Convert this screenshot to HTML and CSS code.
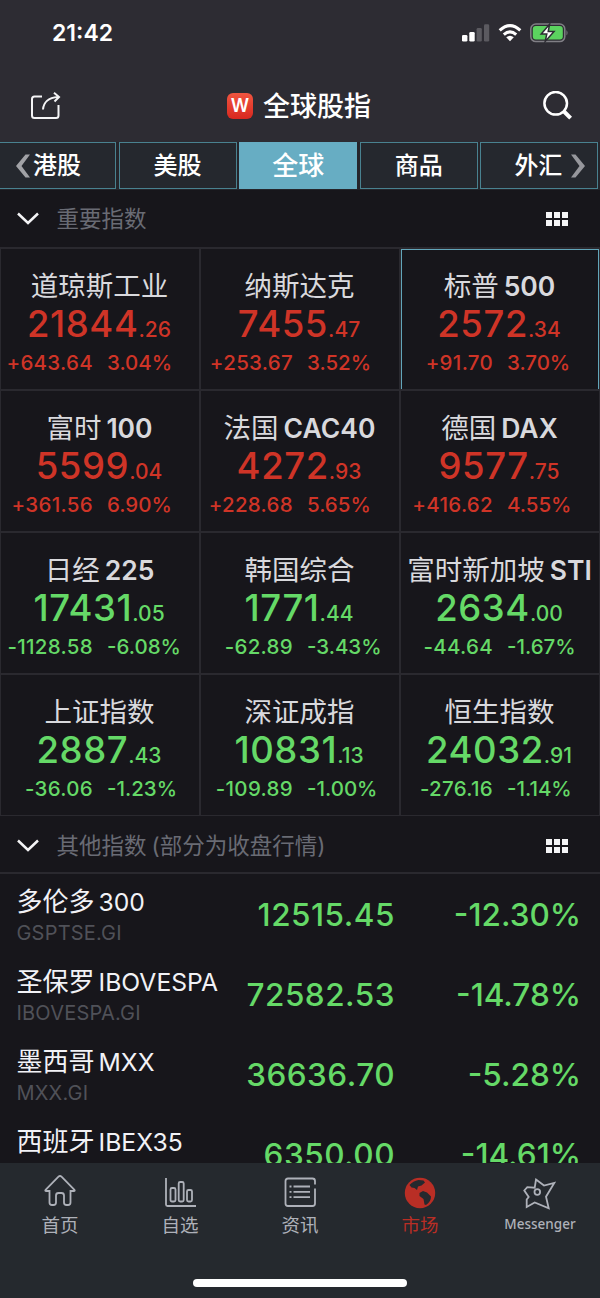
FILE: index.html
```html
<!DOCTYPE html>
<html lang="zh-CN">
<head>
  <meta charset="UTF-8" />
  <meta name="viewport" content="width=device-width, initial-scale=1.0"/>
  <title>全球股指</title>
  <link rel="stylesheet" href="styles.css">
</head>

<body>
  <header>
    <div class="status-bar">
      <span class="time">21:42</span>
      <div class="status-icons">
        <svg class="signal" width="28" height="18" viewBox="0 0 28 18">
          <rect x="0" y="11" width="5.4" height="6.5" rx="1.3" fill="#fff"/>
          <rect x="7.3" y="8" width="5.4" height="9.5" rx="1.3" fill="#fff"/>
          <rect x="14.6" y="4" width="5.2" height="13.5" rx="1.3" fill="#5b5a60"/>
          <rect x="22" y="0.3" width="5.2" height="17.2" rx="1.3" fill="#5b5a60"/>
        </svg>
        <svg class="wifi" width="24" height="18" viewBox="0 0 24 18">
          <g fill="none" stroke="#fff" stroke-width="3.1">
            <path d="M1.7 6.4Q12-3 22.3 6.4"/>
            <path d="M5.8 10.6Q12 5 18.2 10.6"/>
          </g>
          <path d="M8.2 13.3Q12 10.2 15.8 13.3L12 17.3Z" fill="#fff"/>
        </svg>
        <svg class="battery" width="39" height="20" viewBox="0 0 39 20">
          <rect x="0.8" y="1" width="34" height="17.6" rx="5" fill="none" stroke="#807f85" stroke-width="1.5"/>
          <rect x="2.8" y="3" width="30" height="13.6" rx="3" fill="#5bd35f"/>
          <path d="M36.5 7Q38.6 9.8 36.5 12.6Z" fill="#807f85"/>
          <path d="M19.6 1.2L11.2 11h5.6l-1.6 7.4L24 8.6h-5.8Z" fill="#fff" stroke="#2d2c33" stroke-width="1.5"/>
        </svg>
      </div>
    </div>
    <div class="title-bar">
      <svg class="share" width="31" height="29" viewBox="0 0 31 29" fill="none" stroke="#f4f4f6" stroke-width="2">
        <path d="M12 4.500H4.500Q2 4.500 2 7V23.500Q2 26 4.500 26H26Q28.500 26 28.500 23.500V13"/>
        <path d="M13 17.500C13.500 11 18 5.500 28 5"/>
        <path d="M24 0.800L29 5L24.500 9.500"/>
      </svg>
      <h1><span class="logo">W</span>全球股指</h1>
      <svg class="search" width="30" height="30" viewBox="0 0 30 30" fill="none" stroke="#fff">
        <circle cx="12.700" cy="12.300" r="11.300" stroke-width="2.500"/>
        <path d="M20.500 20L27.600 27.200" stroke-width="4"/>
      </svg>
    </div>
    <nav class="tabs">
      <a class="tab first"><svg width="14" height="24" viewBox="0 0 14 24"><path d="M14 0.500H9.500L0 12L9.500 23.500H14L5.500 12Z" fill="#a1a2a6"/></svg>港股</a>
      <a class="tab">美股</a>
      <a class="tab active">全球</a>
      <a class="tab">商品</a>
      <a class="tab last">外汇<svg width="14" height="24" viewBox="0 0 14 24"><path d="M0 0.500H4.500L14 12L4.500 23.500H0L8.500 12Z" fill="#96979c"/></svg></a>
    </nav>
  </header>

  <main>
    <div class="section-head">
      <svg class="chevron" width="22" height="13" viewBox="0 0 22 13"><path d="M1 1.500L11 11L21 1.500"/></svg>
      <h2>重要指数</h2>
      <div class="dots"><i></i><i></i><i></i><i></i><i></i><i></i></div>
    </div>

    <section class="grid">
      <div class="cell up">
        <div class="name">道琼斯工业</div>
        <div class="price">21844<small>.26</small></div>
        <div class="change"><span>+643.64</span><span>3.04%</span></div>
      </div>
      <div class="cell up">
        <div class="name">纳斯达克</div>
        <div class="price">7455<small>.47</small></div>
        <div class="change"><span>+253.67</span><span>3.52%</span></div>
      </div>
      <div class="cell up selected">
        <div class="name">标普<b>500</b></div>
        <div class="price">2572<small>.34</small></div>
        <div class="change"><span>+91.70</span><span>3.70%</span></div>
      </div>
      <div class="cell up">
        <div class="name">富时<b>100</b></div>
        <div class="price">5599<small>.04</small></div>
        <div class="change"><span>+361.56</span><span>6.90%</span></div>
      </div>
      <div class="cell up">
        <div class="name">法国<b>CAC40</b></div>
        <div class="price">4272<small>.93</small></div>
        <div class="change"><span>+228.68</span><span>5.65%</span></div>
      </div>
      <div class="cell up">
        <div class="name">德国<b>DAX</b></div>
        <div class="price">9577<small>.75</small></div>
        <div class="change"><span>+416.62</span><span>4.55%</span></div>
      </div>
      <div class="cell down">
        <div class="name">日经<b>225</b></div>
        <div class="price">17431<small>.05</small></div>
        <div class="change"><span>-1128.58</span><span>-6.08%</span></div>
      </div>
      <div class="cell down">
        <div class="name">韩国综合</div>
        <div class="price">1771<small>.44</small></div>
        <div class="change"><span>-62.89</span><span>-3.43%</span></div>
      </div>
      <div class="cell down">
        <div class="name">富时新加坡<b>STI</b></div>
        <div class="price">2634<small>.00</small></div>
        <div class="change"><span>-44.64</span><span>-1.67%</span></div>
      </div>
      <div class="cell down">
        <div class="name">上证指数</div>
        <div class="price">2887<small>.43</small></div>
        <div class="change"><span>-36.06</span><span>-1.23%</span></div>
      </div>
      <div class="cell down">
        <div class="name">深证成指</div>
        <div class="price">10831<small>.13</small></div>
        <div class="change"><span>-109.89</span><span>-1.00%</span></div>
      </div>
      <div class="cell down">
        <div class="name">恒生指数</div>
        <div class="price">24032<small>.91</small></div>
        <div class="change"><span>-276.16</span><span>-1.14%</span></div>
      </div>
    </section>

    <div class="section-head other">
      <svg class="chevron" width="22" height="13" viewBox="0 0 22 13"><path d="M1 1.500L11 11L21 1.500"/></svg>
      <h2>其他指数<span class="note">(部分为收盘行情)</span></h2>
      <div class="dots"><i></i><i></i><i></i><i></i><i></i><i></i></div>
    </div>

    <section class="list">
      <div class="row">
        <div class="info"><div class="label">多伦多<b>300</b></div><div class="code">GSPTSE.GI</div></div>
        <div class="last-price">12515.45</div>
        <div class="percent">-12.30%</div>
      </div>
      <div class="row">
        <div class="info"><div class="label">圣保罗<b>IBOVESPA</b></div><div class="code">IBOVESPA.GI</div></div>
        <div class="last-price">72582.53</div>
        <div class="percent">-14.78%</div>
      </div>
      <div class="row">
        <div class="info"><div class="label">墨西哥<b>MXX</b></div><div class="code">MXX.GI</div></div>
        <div class="last-price">36636.70</div>
        <div class="percent">-5.28%</div>
      </div>
      <div class="row">
        <div class="info"><div class="label">西班牙<b>IBEX35</b></div></div>
        <div class="last-price">6350.00</div>
        <div class="percent">-14.61%</div>
      </div>
    </section>
  </main>

  <footer>
    <nav class="bottom-nav">
      <a>
        <svg width="34" height="34" viewBox="0 0 34 34">
          <path d="M6.500 18H3.300Q1.500 18 2.800 16.500L15.500 3.700Q17 2.300 18.500 3.700L31.200 16.500Q32.500 18 30.700 18H27.500V29.500Q27.500 32 25 32H23.500Q21 32 21 29.500V22.500Q21 20 18.500 20H15.500Q13 20 13 22.500V29.500Q13 32 10.500 32H9Q6.500 32 6.500 29.500Z"/>
        </svg>
        首页
      </a>
      <a>
        <svg width="34" height="34" viewBox="0 0 34 34">
          <path d="M3 5V31.500Q3 33 4.500 33H33"/>
          <rect x="7.500" y="15" width="5" height="13.500" rx="1.500"/>
          <rect x="15.700" y="9" width="5" height="19.500" rx="1.500"/>
          <rect x="24" y="17" width="5" height="11.500" rx="1.500"/>
        </svg>
        自选
      </a>
      <a>
        <svg width="34" height="34" viewBox="0 0 34 34">
          <path d="M32 11.500V8Q32 5.500 29.500 5.500H5Q2.500 5.500 2.500 8V30.500Q2.500 33 5 33H29.500Q32 33 32 30.500V15.500"/>
          <path d="M10.500 13.500H27M10.500 18.800H27M10.500 24.200H27M6.500 13.500H8.500M6.500 18.800H8.500M6.500 24.200H8.500"/>
        </svg>
        资讯
      </a>
      <a class="current">
        <svg width="34" height="34" viewBox="0 0 34 34">
          <circle cx="17" cy="20" r="15.200" fill="#b92e25" stroke="none"/>
          <path d="M6.500 12Q10 8 15.500 7L20.500 7.500L22 9.500L18.500 12.500L15 13.500L14 17L11.500 15L8.500 14.500Z" fill="#25292e" stroke="none"/>
          <path d="M16.500 20L20 18L24 19.500L28 23.500Q28 29 23 32L21.500 31.500L20.500 26L16.500 23Z" fill="#25292e" stroke="none"/>
        </svg>
        市场
      </a>
      <a class="messenger">
        <svg width="34" height="34" viewBox="0 0 34 34">
          <path d="M13 6.500L21 12.500L31.300 10L23 23.700L25.700 35.300L11.700 29.500L3.700 34V26.500L5.700 24L1.300 17.500L4.300 14.200L11.700 14.700Z"/>
          <circle cx="14.300" cy="19" r="2.800"/>
        </svg>
        Messenger
      </a>
    </nav>
    <div class="home-indicator"></div>
  </footer>
</body>
</html>
```
FILE: styles.css
```css
* {
  margin: 0;
  padding: 0;
  box-sizing: border-box;
}

body {
  font-family: Inter, 'Noto Sans CJK SC', sans-serif;
  background: #17161b;
  color: white;
  width: 600px;
  height: 1298px;
  overflow: hidden;
  display: flex;
  flex-direction: column;
}

/* status bar and title */
header {
  height: 190px;
  background: #2d2c33;
  flex-shrink: 0;
}
.status-bar {
  height: 66px;
  padding: 0 31px 0 52px;
  display: flex;
  justify-content: space-between;
  align-items: center;
}
.time {
  font-size: 23px;
  font-weight: 600;
}
.status-icons {
  display: flex;
  align-items: center;
}
.wifi {
  margin: 0 8px 0 8px;
}
.title-bar {
  height: 76px;
  padding: 4px 27px 0 30px;
  display: flex;
  justify-content: space-between;
  align-items: center;
}
h1 {
  margin-right: 6px;
  padding-top: 2px;
  font-size: 27px;
  font-weight: 500;
  line-height: 40px;
  display: flex;
  align-items: center;
}
.logo {
  width: 26px;
  height: 26px;
  margin: 0 10px 3px 0;
  border-radius: 6px;
  background: linear-gradient(#f05540, #d8281f);
  font-size: 18px;
  font-weight: 600;
  line-height: 26px;
  text-align: center;
}

/* market tabs */
.tabs {
  height: 48px;
  background: #25252b;
  display: grid;
  grid-template-columns: 116px 118px 118px 118px 118px;
  column-gap: 2.6px;
}
.tab {
  height: 47px;
  border: 1px solid #498290;
  background: #25282e;
  font-size: 24px;
  font-weight: 500;
  display: flex;
  align-items: center;
  justify-content: center;
  padding-bottom: 5px;
}
.tab svg {
  margin-top: 5px;
}
.tab.active {
  background: #67adc3;
  border-color: #67adc3;
  font-size: 26px;
}
.tab.first {
  border-left: none;
  justify-content: flex-start;
  padding-left: 16px;
}
.tab.first svg {
  margin-right: 3px;
}
.tab.last {
  justify-content: flex-end;
  padding-right: 12px;
}
.tab.last svg {
  margin-left: 9px;
}

main {
  flex: 1;
  overflow: hidden;
}

/* section headings */
.section-head {
  height: 58px;
  padding: 0 32px 0 17px;
  border-bottom: 1px solid #2a292f;
  display: flex;
  align-items: center;
}
.section-head.other {
  padding-top: 3px;
  border-bottom-width: 2px;
}
.chevron {
  fill: none;
  stroke: #f4f4f6;
  stroke-width: 2.5;
}
h2 {
  flex: 1;
  margin-left: 17.5px;
  color: #696b74;
  font-size: 22.5px;
  font-weight: 400;
  line-height: 32px;
}
.note {
  margin-left: 5px;
}
.dots {
  display: grid;
  grid-template-columns: repeat(3, 6px);
  gap: 2px;
}
.dots i {
  height: 6px;
  background: #f4f4f6;
}

/* index grid */
.grid {
  display: grid;
  grid-template-columns: repeat(3, 200px);
  grid-auto-rows: 142px;
}
.cell {
  border: 1px solid #2a292f;
  padding-top: 18px;
  text-align: center;
  white-space: nowrap;
}
.cell.selected {
  box-shadow: inset 1px 1px #62a5b9, inset -1px 0 #62a5b9;
}
.name {
  height: 38px;
  padding-right: 1px;
  line-height: 38px;
  font-size: 27.5px;
  color: #d9d9dd;
}
.name b {
  margin-left: 5px;
  font-size: 26.5px;
  font-weight: 600;
}
.price {
  height: 38px;
  padding-right: 2px;
  line-height: 38px;
  font-size: 36.5px;
  font-weight: 500;
  letter-spacing: 0.6px;
}
.price small {
  font-size: 21px;
  font-weight: 500;
  letter-spacing: 0;
}
.change {
  height: 40px;
  line-height: 40px;
  font-size: 20.5px;
  font-weight: 500;
  display: grid;
  grid-template-columns: 92px 92px;
  gap: 14px;
  letter-spacing: 0.3px;
}
.change span:first-child {
  justify-self: end;
}
.change span:last-child {
  justify-self: start;
  letter-spacing: 0;
}
.up .price,
.up .change {
  color: #cf3427;
}
.down .price,
.down .change {
  color: #65d967;
}

/* other indices */
.row {
  height: 80px;
  padding: 10px 19px 0 16.5px;
  display: grid;
  grid-template-columns: 210px 168.5px 186px;
}
.label {
  height: 36px;
  line-height: 36px;
  font-size: 26px;
  color: #f2f2f6;
  white-space: nowrap;
}
.label b {
  margin-left: 4px;
  font-size: 24.7px;
  font-weight: 400;
}
.code {
  line-height: 26px;
  font-size: 20px;
  letter-spacing: 0.2px;
  color: #505158;
}
.last-price,
.percent {
  line-height: 62px;
  font-size: 31.5px;
  font-weight: 500;
  text-align: right;
  color: #65d967;
}
.last-price {
  letter-spacing: 0.5px;
}

/* bottom navigation */
footer {
  height: 135px;
  background: #25292e;
  flex-shrink: 0;
}
.bottom-nav {
  display: flex;
  height: 116px;
}
.bottom-nav a {
  flex: 1;
  padding-top: 10px;
  display: flex;
  flex-direction: column;
  align-items: center;
  font-size: 18.5px;
  line-height: 36px;
  color: #aeb1b9;
}
.bottom-nav svg {
  fill: none;
  stroke: #aeb1b9;
  stroke-width: 1.8;
  flex-shrink: 0;
  overflow: visible;
}
.bottom-nav a.current {
  color: #b92e25;
}
.bottom-nav a.messenger {
  font-family: 'Noto Sans', sans-serif;
  font-size: 13.5px;
  font-weight: 500;
  line-height: 34px;
}
.home-indicator {
  width: 214px;
  height: 8px;
  margin: 0 auto;
  border-radius: 4px;
  background: white;
}
```
